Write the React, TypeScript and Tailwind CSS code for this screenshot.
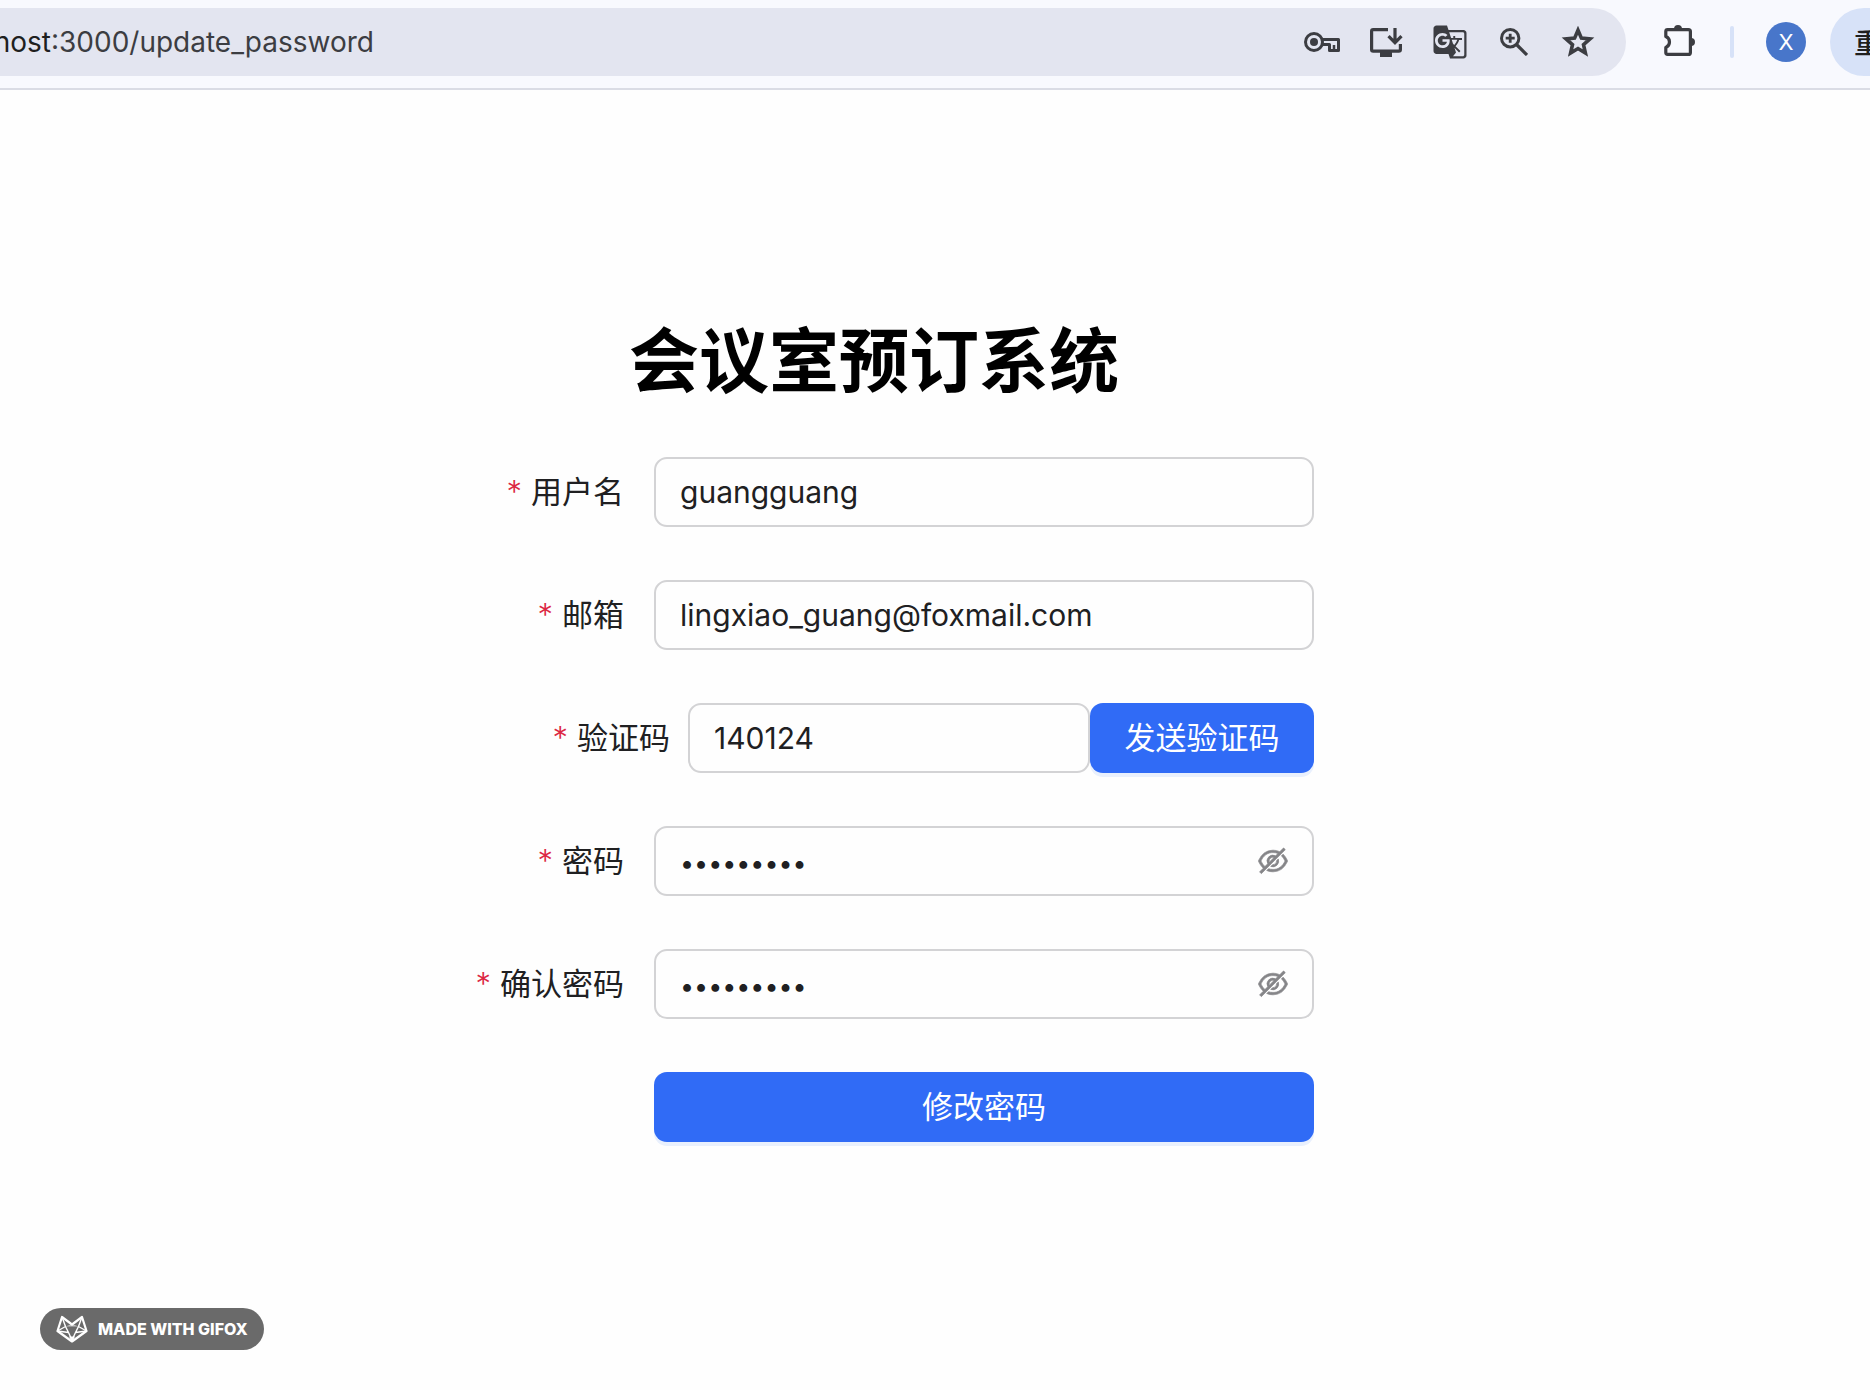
import { useState, type ReactNode } from 'react';
import { AiOutlineEyeInvisible } from 'react-icons/ai';
import { MdGTranslate } from 'react-icons/md';

function KeyIcon() {
  return (
    <svg width="36" height="20" viewBox="0 0 36 20" fill="none" stroke="currentColor" strokeWidth="3" strokeLinejoin="round">
      <circle cx="10" cy="10" r="8.5" />
      <circle cx="10" cy="10" r="4" fill="currentColor" stroke="none" />
      <path d="M18 7.5H34.5V18.5H25.5V12.5H18" />
      <path d="M30 13v5" strokeWidth="2.5" />
    </svg>
  );
}

function InstallIcon() {
  return (
    <svg width="34" height="30" viewBox="0 0 34 30" fill="none" stroke="currentColor" strokeWidth="3.2" strokeLinejoin="round">
      <path d="M19 2.6H4.2Q2.6 2.6 2.6 4.2V22.6Q2.6 24.2 4.2 24.2H29.8Q31.4 24.2 31.4 22.6V17" />
      <path d="M11 23.5H23V30H11Z" fill="currentColor" stroke="none" />
      <path d="M26 1V15M19.5 9.2L26 15.7L32.5 9.2" strokeLinejoin="miter" />
    </svg>
  );
}

function ZoomIcon() {
  return (
    <svg width="28" height="28" viewBox="0 0 28 28" fill="none" stroke="currentColor" strokeWidth="3">
      <circle cx="10.2" cy="10.2" r="8.7" />
      <path d="M16.5 16.5L27 27" strokeWidth="3.2" />
      <path d="M10.2 5.7V14.7M5.7 10.2H14.7" strokeWidth="2.8" />
    </svg>
  );
}

function StarIcon() {
  return (
    <svg width="34" height="32" viewBox="0 0 34 32" fill="none" stroke="currentColor" strokeWidth="3.6">
      <path d="M17 4.2L20.4 12.1L29 12.9L22.5 18.6L24.4 27L17 22.5L9.6 27L11.5 18.6L5 12.9L13.6 12.1Z" />
    </svg>
  );
}

function PuzzleIcon() {
  return (
    <svg width="32" height="32" viewBox="0 0 32 32" fill="none" stroke="currentColor" strokeWidth="3.2" strokeLinejoin="round">
      <path d="M3.6 5.6H24.4Q26.4 5.6 26.4 7.6V28.4Q26.4 30.4 24.4 30.4H3.6Q1.8 30.4 1.8 28.6V23.4A5.8 5.8 0 0 0 1.8 12.6V7.4Q1.8 5.6 3.6 5.6Z" />
      <path d="M10 5A4 4 0 0 1 18 5ZM27 14A4 4 0 0 1 27 22Z" fill="currentColor" stroke="none" />
    </svg>
  );
}

function FoxLogo() {
  return (
    <svg width="32" height="28" viewBox="0 0 32 28" fill="none" stroke="currentColor" strokeWidth="2.2" strokeLinejoin="round">
      <path d="M6 2L16 9.5L26 2L30.5 16L16 26.5L1.5 16Z" />
      <path d="M6 2L9.5 11.5L1.5 16L12.5 17.5L16 25L19.5 17.5L30.5 16L22.5 11.5L26 2M9.5 11.5L12.5 17.5M22.5 11.5L19.5 17.5" strokeWidth="1.4" />
      <path d="M9.5 11.5L16 9L22.5 11.5Z" fill="currentColor" fillOpacity="0.6" stroke="none" />
      <path d="M13 21.5H19L16 27Z" fill="currentColor" stroke="none" />
    </svg>
  );
}

function ToolButton({ label, children }: { label: string; children: ReactNode }) {
  return (
    <button type="button" aria-label={label} className="flex w-16 items-center justify-center self-stretch">
      {children}
    </button>
  );
}

function Toolbar() {
  return (
    <header className="flex items-center overflow-hidden border-b-2 border-[#dadce5] bg-[#f8f9fe] pt-2 pb-3 text-[#3c3d42]">
      <div className="flex h-[68px] min-w-0 flex-1 items-center rounded-r-full bg-[#e3e5f0] pr-4">
        <div className="flex min-w-0 flex-1 items-center">
          <div className="flex w-[374px] justify-end overflow-hidden whitespace-nowrap font-[Inter,sans-serif] text-[28px]">
            <span className="text-[#1f1f1f]">localhost</span>
            <span>:3000/update_password</span>
          </div>
        </div>
        <ToolButton label="管理密码"><KeyIcon /></ToolButton>
        <ToolButton label="安装应用"><InstallIcon /></ToolButton>
        <ToolButton label="翻译此页"><MdGTranslate size={36} /></ToolButton>
        <ToolButton label="缩放"><ZoomIcon /></ToolButton>
        <ToolButton label="加入书签"><StarIcon /></ToolButton>
      </div>
      <button type="button" aria-label="扩展程序" className="ml-[38px] shrink-0 pb-1"><PuzzleIcon /></button>
      <div className="ml-[34px] h-8 w-1 shrink-0 rounded-full bg-[#d7e2f8]" />
      <button type="button" className="ml-8 size-10 shrink-0 rounded-full bg-[#4876ca] font-[Inter,sans-serif] text-[22px] leading-10 text-white">X</button>
      <button type="button" className="ml-6 h-[68px] w-10 shrink-0 overflow-hidden whitespace-nowrap rounded-l-full bg-[#d7e2f8] pl-6 text-left font-['Noto_Sans_CJK_SC',sans-serif] text-[28px] font-medium text-[#1f1f1f]">重</button>
    </header>
  );
}

const inputClass =
  'h-[70px] w-full min-w-0 rounded-[13px] border-2 border-[#d3d3d5] bg-transparent px-6 text-[#202022] outline-none focus:border-[#306bf6]';

const buttonClass =
  'h-[70px] rounded-[13px] bg-[#306bf6] text-[31px] text-white shadow-[0_4px_0_#e9f0fd]';

function FieldLabel({ htmlFor, children }: { htmlFor: string; children: ReactNode }) {
  return (
    <label htmlFor={htmlFor} className="flex shrink-0 items-center gap-[9px] whitespace-nowrap text-[31px] text-[#202022]">
      <span className="font-light text-[#dc2743]">*</span>
      {children}
    </label>
  );
}

function Row({ id, label, children }: { id: string; label: string; children: ReactNode }) {
  return (
    <div className="grid grid-cols-4 items-center">
      <div className="flex justify-end pr-[30px]">
        <FieldLabel htmlFor={id}>{label}</FieldLabel>
      </div>
      <div className="col-span-3">{children}</div>
    </div>
  );
}

function PasswordInput({ id }: { id: string }) {
  const [visible, setVisible] = useState(false);
  return (
    <div className="relative">
      <input id={id} type={visible ? 'text' : 'password'} defaultValue="guang1234" className={`${inputClass} pt-1 text-[25px]`} />
      <button
        type="button"
        aria-label="显示密码"
        onClick={() => setVisible(!visible)}
        className="absolute inset-y-0 right-6 text-[#858588]"
      >
        <AiOutlineEyeInvisible size={34} strokeWidth={20} />
      </button>
    </div>
  );
}

export default function App() {
  return (
    <div className="flex min-h-screen flex-col bg-[#fefefe] font-[Inter,'Noto_Sans_CJK_SC',sans-serif]">
      <Toolbar />
      <main className="flex-1 pt-[222px] pr-[122px]">
        <h1 className="text-center text-[70px] leading-[100px] font-bold text-black">会议室预订系统</h1>
        <form className="mx-auto mt-[45px] flex max-w-[880px] flex-col gap-[53px]" onSubmit={(e) => e.preventDefault()}>
          <Row id="username" label="用户名">
            <input id="username" defaultValue="guangguang" className={`${inputClass} text-[30px]`} />
          </Row>
          <Row id="email" label="邮箱">
            <input id="email" defaultValue="lingxiao_guang@foxmail.com" className={`${inputClass} text-[30px]`} />
          </Row>
          <div className="flex items-center justify-end">
            <FieldLabel htmlFor="captcha">验证码</FieldLabel>
            <div className="ml-[18px] w-[402px]">
              <input id="captcha" defaultValue="140124" className={`${inputClass} text-[30px]`} />
            </div>
            <button type="button" className={`${buttonClass} w-56`}>发送验证码</button>
          </div>
          <Row id="password" label="密码">
            <PasswordInput id="password" />
          </Row>
          <Row id="confirm" label="确认密码">
            <PasswordInput id="confirm" />
          </Row>
          <div className="grid grid-cols-4">
            <button type="submit" className={`${buttonClass} col-span-3 col-start-2`}>修改密码</button>
          </div>
        </form>
      </main>
      <footer className="flex px-10 pb-10">
        <a href="#gifox" className="flex h-[42px] items-center gap-[10px] rounded-full bg-[#6a6a6a] px-4 font-[Inter,sans-serif] text-base font-extrabold text-white">
          <FoxLogo />
          MADE WITH GIFOX
        </a>
      </footer>
    </div>
  );
}
